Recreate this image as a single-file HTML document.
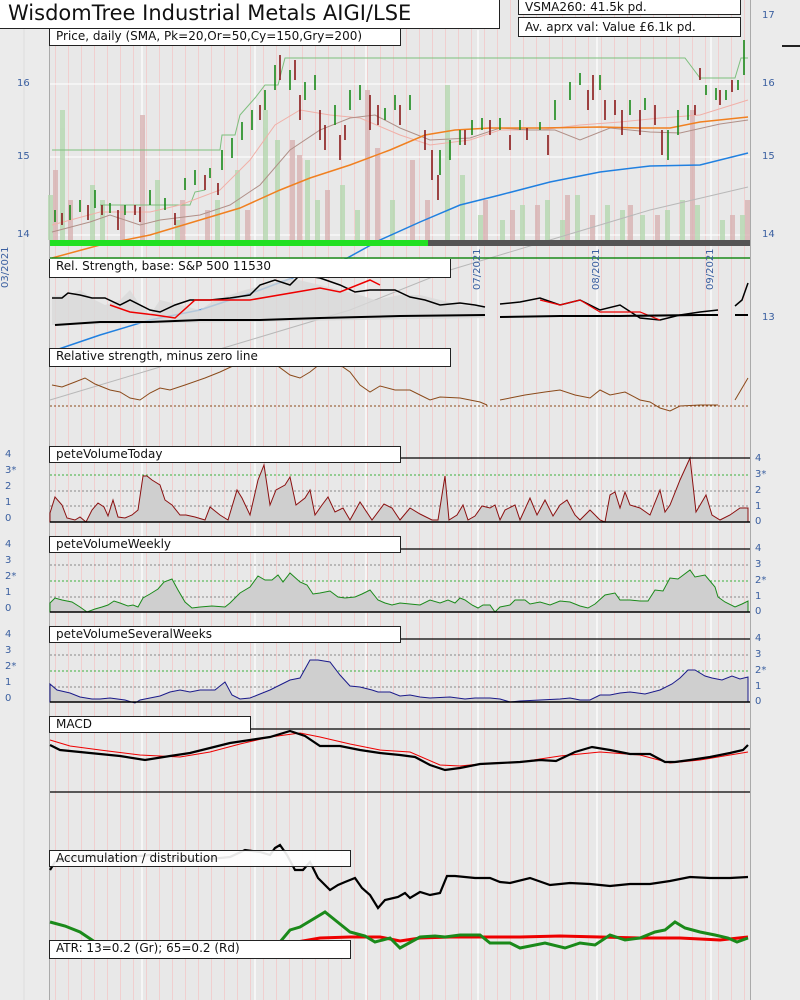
<!DOCTYPE html>
<html><head><meta charset="utf-8"><style>
body{margin:0;width:800px;height:1000px;overflow:hidden;background:#ebebeb;font-family:"DejaVu Sans","Liberation Sans",sans-serif;}
#wrap{position:relative;width:800px;height:1000px;}
.plot{position:absolute;left:49px;top:0;width:701px;height:1000px;background-color:#e8e8e8;
background-image:repeating-linear-gradient(90deg,transparent 0 6px,rgba(255,160,160,.35) 6px 7px,transparent 7px 13px);}
.box{position:absolute;background:#fff;border:1px solid #222;border-top:1px solid #222;font-size:12px;line-height:15px;padding-left:6px;box-sizing:border-box;color:#111;white-space:nowrap;}
.lab{position:absolute;font-size:10px;color:#3a5fa0;}
svg{position:absolute;left:0;top:0;}
</style></head><body><div id="wrap">
<div class="plot"></div>
<svg width="800" height="1000" viewBox="0 0 800 1000">
<!-- borders -->
<line x1="24" y1="0" x2="24" y2="1000" stroke="#dcdcdc"/>
<line x1="49.5" y1="30" x2="49.5" y2="1000" stroke="#aaa"/>
<line x1="750.5" y1="0" x2="750.5" y2="1000" stroke="#aaa"/>
<!-- month white lines -->
<g stroke="#fff" stroke-width="1.2">
<line x1="142" y1="30" x2="142" y2="1000"/><line x1="255" y1="30" x2="255" y2="1000"/><line x1="366" y1="30" x2="366" y2="1000"/><line x1="478" y1="30" x2="478" y2="1000"/><line x1="597" y1="30" x2="597" y2="1000"/><line x1="711" y1="30" x2="711" y2="1000"/>
</g>
<!-- grid -->
<g stroke="#fff" stroke-width="1"><line x1="50" y1="84" x2="750" y2="84"/><line x1="50" y1="157" x2="750" y2="157"/><line x1="50" y1="235" x2="750" y2="235"/></g>
<!-- volume bars -->
<g fill="#b5d8b0" opacity=".8">
<rect x="48" y="195" width="5" height="45"/><rect x="60" y="110" width="5" height="130"/><rect x="90" y="185" width="5" height="55"/><rect x="100" y="200" width="5" height="40"/><rect x="155" y="180" width="5" height="60"/><rect x="175" y="220" width="5" height="20"/><rect x="215" y="200" width="5" height="40"/><rect x="235" y="170" width="5" height="70"/><rect x="263" y="110" width="5" height="130"/><rect x="275" y="140" width="5" height="100"/><rect x="305" y="160" width="5" height="80"/><rect x="315" y="200" width="5" height="40"/><rect x="340" y="185" width="5" height="55"/><rect x="355" y="210" width="5" height="30"/><rect x="390" y="200" width="5" height="40"/><rect x="445" y="85" width="5" height="155"/><rect x="460" y="175" width="5" height="65"/><rect x="478" y="215" width="5" height="25"/><rect x="500" y="220" width="5" height="20"/><rect x="520" y="205" width="5" height="35"/><rect x="545" y="200" width="5" height="40"/><rect x="560" y="220" width="5" height="20"/><rect x="575" y="195" width="5" height="45"/><rect x="605" y="205" width="5" height="35"/><rect x="620" y="210" width="5" height="30"/><rect x="640" y="215" width="5" height="25"/><rect x="665" y="210" width="5" height="30"/><rect x="680" y="200" width="5" height="40"/><rect x="695" y="205" width="5" height="35"/><rect x="720" y="220" width="5" height="20"/><rect x="740" y="215" width="5" height="25"/>
</g>
<g fill="#d8b3b3" opacity=".8">
<rect x="53" y="170" width="5" height="70"/><rect x="68" y="200" width="5" height="40"/><rect x="120" y="205" width="5" height="35"/><rect x="140" y="115" width="5" height="125"/><rect x="180" y="200" width="5" height="40"/><rect x="205" y="210" width="5" height="30"/><rect x="245" y="210" width="5" height="30"/><rect x="290" y="140" width="5" height="100"/><rect x="297" y="155" width="5" height="85"/><rect x="325" y="190" width="5" height="50"/><rect x="365" y="90" width="5" height="150"/><rect x="375" y="148" width="5" height="92"/><rect x="410" y="160" width="5" height="80"/><rect x="425" y="200" width="5" height="40"/><rect x="483" y="200" width="5" height="40"/><rect x="510" y="210" width="5" height="30"/><rect x="535" y="205" width="5" height="35"/><rect x="565" y="195" width="5" height="45"/><rect x="590" y="215" width="5" height="25"/><rect x="628" y="205" width="5" height="35"/><rect x="655" y="215" width="5" height="25"/><rect x="690" y="110" width="5" height="130"/><rect x="730" y="215" width="5" height="25"/><rect x="745" y="200" width="5" height="40"/>
</g>
<!-- peak step line -->
<polyline fill="none" stroke="#7dbf7d" stroke-width="1" points="52,150 220,150 222,135 235,135 240,115 255,98 265,85 278,85 285,58 685,58 700,78 735,78 741,58 748,58"/>
<polyline fill="none" stroke="#7dbf7d" stroke-width="1" points="100,205 190,205 195,192 205,190"/>
<!-- SMAs -->
<polyline fill="none" stroke="#f0b0a8" stroke-width="1" points="52,225 100,212 150,212 180,205 220,190 250,160 275,125 300,110 330,115 360,118 400,135 430,145 470,140 500,130 540,130 580,125 620,122 660,118 700,115 748,100"/>
<polyline fill="none" stroke="#b09088" stroke-width="1" points="52,232 90,222 110,215 140,225 160,220 200,215 230,205 260,185 290,150 320,130 350,118 375,115 400,128 430,140 470,138 500,128 530,130 555,130 580,140 610,128 650,132 680,133 720,124 748,120"/>
<polyline fill="none" stroke="#f08020" stroke-width="1.5" points="52,258 100,245 150,235 200,220 240,208 280,190 310,178 350,165 390,150 425,135 455,130 490,128 540,128 600,127 640,128 670,128 700,122 748,117"/>
<polyline fill="none" stroke="#2080e0" stroke-width="1.5" points="50,352 100,335 150,320 200,310 260,290 300,275 340,262 380,240 420,222 460,205 500,195 550,182 600,172 650,166 700,165 748,153"/>
<polyline fill="none" stroke="#b8b8b8" stroke-width="1" points="50,400 150,370 250,340 350,310 450,270 550,240 650,210 748,187"/>
<!-- candles -->
<g stroke-width="1.6">
<path stroke="#1a8a1a" d="M55 222v-12M70 220v-15M80 212v-12M95 208v-18M110 213v-10M125 215v-10M150 205v-15M165 210v-12M185 190v-12M195 185v-15M210 178v-10M222 170v-20M232 158v-20M242 140v-18M252 130v-20M265 110v-20M275 90v-25M290 90v-20M305 100v-18M315 90v-15M335 125v-20M350 110v-20M360 100v-15M385 120v-12M395 110v-15M410 110v-15M440 175v-25M450 160v-20M460 145v-15M472 135v-15M482 130v-12M500 130v-12M520 130v-10M540 130v-8M555 120v-20M570 100v-18M580 85v-12M600 90v-15M630 115v-15M645 110v-12M668 160v-30M678 135v-25M688 120v-15M706 95v-10M716 100v-12M726 100v-10M738 90v-10M744 75v-35"/>
<path stroke="#8a1a1a" d="M62 225v-12M88 220v-15M102 215v-10M118 230v-20M135 215v-10M140 222v-15M175 225v-12M205 190v-15M218 195v-12M260 120v-15M280 80v-25M295 80v-20M300 120v-25M320 140v-30M325 150v-25M340 160v-25M345 140v-15M370 130v-35M378 125v-20M400 125v-20M425 150v-20M432 180v-30M438 200v-25M465 145v-15M490 135v-15M510 150v-15M527 140v-12M548 155v-20M588 110v-20M593 100v-25M605 120v-20M615 115v-15M622 135v-25M640 135v-25M655 125v-20M662 155v-25M695 115v-10M700 80v-12M720 105v-15M732 92v-12"/>
</g>
<!-- green band -->
<rect x="50" y="240" width="700" height="6" fill="#555"/>
<rect x="50" y="240" width="378" height="6" fill="#22e022"/>
<line x1="50" y1="258" x2="750" y2="258" stroke="#1a8a1a" stroke-width="1.5"/>
<line x1="782" y1="46" x2="800" y2="46" stroke="#222" stroke-width="2"/>
<!-- RS panel -->
<polygon fill="#d8d8d8" opacity=".8" points="52,296 70,295 80,290 95,300 105,305 120,300 130,290 140,305 150,315 160,300 180,305 200,310 215,300 230,295 245,290 265,285 290,278 320,285 340,290 360,295 375,300 400,295 420,295 440,300 460,305 485,307 485,318 52,325"/>
<polyline fill="none" stroke="#000" stroke-width="1.5" points="52,298 62,298 68,293 80,295 92,298 105,298 120,305 130,300 150,310 160,312 175,305 190,300 210,300 230,298 250,295 260,285 275,280 290,285 300,275 320,278 340,285 355,292 370,290 395,290 410,297 425,300 440,305 460,303 475,305 485,307"/>
<polyline fill="none" stroke="#e00" stroke-width="1.5" points="110,305 130,312 155,315 175,318 195,300 215,300 250,300 320,288 340,292 370,280 380,285"/>
<polyline fill="none" stroke="#000" stroke-width="1.5" points="500,304 520,302 540,298 560,305 580,300 600,310 620,305 640,318 660,320 680,315 700,312 718,310"/>
<polyline fill="none" stroke="#e00" stroke-width="1.2" points="540,300 560,305 580,300 600,312 640,312 660,320"/>
<polyline fill="none" stroke="#000" stroke-width="1.5" points="735,306 742,300 748,283"/>
<polyline fill="none" stroke="#000" stroke-width="2" points="55,325 100,322 150,322 200,320 260,320 320,318 400,316 485,315"/>
<polyline fill="none" stroke="#000" stroke-width="2" points="500,317 560,316 620,316 700,315 718,315"/>
<line x1="735" y1="315" x2="748" y2="315" stroke="#000" stroke-width="2"/>
<!-- RS minus zero -->
<polyline fill="none" stroke="#8a4a1a" stroke-width="1" points="52,385 62,387 75,382 85,378 95,384 110,390 120,392 130,398 140,400 150,393 160,388 170,390 185,385 205,378 220,372 235,365 250,360 260,358 275,364 290,375 300,378 310,372 325,360 340,365 350,372 360,385 370,392 380,386 395,390 410,390 420,395 430,400 440,397 460,398 480,402 487,405"/>
<polyline fill="none" stroke="#8a4a1a" stroke-width="1" points="500,400 510,398 525,395 545,392 560,390 575,395 590,398 600,390 610,395 625,392 640,400 650,402 660,408 670,411 680,406 700,405 718,405"/>
<polyline fill="none" stroke="#8a4a1a" stroke-width="1" points="735,400 748,378"/>
<line x1="50" y1="406" x2="750" y2="406" stroke="#8a4a1a" stroke-dasharray="2,2"/>
<!-- volume panels -->
<g stroke-dasharray="2,2" stroke-width="1">
<line x1="50" y1="475" x2="750" y2="475" stroke="#3bb03b"/><line x1="50" y1="491" x2="750" y2="491" stroke="#888"/><line x1="50" y1="506" x2="750" y2="506" stroke="#888"/>
<line x1="50" y1="565" x2="750" y2="565" stroke="#888"/><line x1="50" y1="581" x2="750" y2="581" stroke="#3bb03b"/><line x1="50" y1="597" x2="750" y2="597" stroke="#888"/>
<line x1="50" y1="655" x2="750" y2="655" stroke="#888"/><line x1="50" y1="671" x2="750" y2="671" stroke="#3bb03b"/><line x1="50" y1="687" x2="750" y2="687" stroke="#888"/>
</g>
<polygon fill="#cfcfcf" stroke="#8b1010" stroke-width="1" points="50,522 50,513 55,497 62,505 67,518 75,520 80,517 86,522 92,510 98,503 104,507 108,516 113,500 118,517 125,518 132,515 138,510 143,476 147,476 152,480 160,485 165,500 172,505 180,515 186,515 195,517 205,520 210,507 220,515 228,520 237,490 242,498 250,515 258,480 264,465 270,505 276,490 285,485 290,477 296,505 305,498 310,490 315,515 322,505 328,497 335,512 343,508 350,520 360,502 372,520 384,504 392,508 400,520 410,508 420,514 432,520 438,520 445,476 449,520 457,515 463,505 468,520 475,516 482,506 490,508 495,505 500,520 505,510 515,505 520,520 530,498 537,515 545,500 553,516 560,505 567,500 575,515 580,520 590,510 600,520 605,522 610,495 615,492 620,508 625,492 630,505 640,508 650,515 660,490 665,512 670,505 680,480 690,458 696,512 706,495 712,515 720,520 730,515 740,508 748,508 748,522"/>
<line x1="50" y1="522" x2="750" y2="522" stroke="#000" stroke-width="1.5"/>
<polygon fill="#cfcfcf" stroke="#1a8a1a" stroke-width="1" points="50,612 50,603 55,598 62,600 72,602 80,607 87,612 95,609 102,607 108,605 114,601 120,603 128,606 133,605 138,607 143,598 150,594 158,589 164,582 172,579 178,590 185,602 192,608 200,607 212,606 225,607 230,603 240,593 250,587 258,576 265,580 272,580 278,575 283,582 290,573 300,582 307,585 313,594 320,593 330,591 338,597 345,598 355,597 362,594 370,590 378,600 385,603 392,605 400,603 410,604 420,605 430,600 440,603 448,600 455,603 460,598 465,600 472,605 478,608 483,605 490,605 495,612 500,607 510,605 515,600 525,600 530,604 540,602 550,605 560,601 570,602 580,606 588,608 595,604 605,595 615,593 620,600 630,600 640,601 648,601 655,590 663,591 670,578 678,579 690,570 695,577 705,575 715,587 718,597 725,602 735,607 742,604 748,601 748,612"/>
<line x1="50" y1="612" x2="750" y2="612" stroke="#000" stroke-width="1.5"/>
<polygon fill="#cfcfcf" stroke="#1a1a8a" stroke-width="1" points="50,702 50,684 57,690 70,693 80,697 92,699 100,699 110,698 125,700 135,703 140,700 150,698 160,696 170,692 180,690 190,692 200,690 215,690 225,682 232,695 240,699 250,698 260,694 270,690 280,685 290,680 300,678 310,660 318,660 330,662 340,675 350,686 360,687 372,690 378,692 390,692 400,696 410,695 420,697 430,698 450,697 465,699 475,698 490,698 500,699 510,702 520,701 540,700 560,699 570,698 580,700 590,700 600,695 610,695 620,693 630,692 645,694 660,690 672,684 680,678 688,670 695,670 705,676 712,678 722,680 732,676 740,679 748,677 748,702"/>
<line x1="50" y1="702" x2="750" y2="702" stroke="#000" stroke-width="1.5"/>
<!-- panel header lines -->
<g stroke="#000" stroke-width="1.3">
<line x1="400" y1="458" x2="750" y2="458"/><line x1="400" y1="549" x2="750" y2="549"/><line x1="400" y1="639" x2="750" y2="639"/><line x1="250" y1="729" x2="750" y2="729"/><line x1="50" y1="792" x2="750" y2="792"/>
</g>
<!-- MACD -->
<polyline fill="none" stroke="#e00" stroke-width="1" points="50,740 70,746 100,750 140,755 180,757 210,752 240,744 270,737 300,733 320,737 350,744 380,750 410,752 440,765 460,766 490,763 520,762 560,756 600,752 640,755 670,763 700,760 748,752"/>
<polyline fill="none" stroke="#000" stroke-width="2.2" points="50,745 60,750 80,752 100,754 120,756 145,760 170,756 190,753 210,748 230,743 250,740 270,737 290,731 305,736 320,746 340,746 360,750 380,753 400,755 415,757 430,765 445,770 460,768 480,764 500,763 520,762 540,760 556,761 575,752 592,747 610,750 630,754 650,754 665,762 675,762 690,760 710,757 730,753 743,750 748,745"/>
<!-- acc/dist -->
<polyline fill="none" stroke="#000" stroke-width="2.2" points="50,870 55,862 70,858 90,855 110,858 130,857 150,855 170,858 200,860 230,857 245,850 260,852 270,855 275,848 280,845 287,855 295,870 303,870 310,862 318,878 330,890 338,885 345,882 355,878 362,888 370,895 378,908 385,900 398,897 405,893 410,898 420,892 430,895 440,893 447,876 455,876 475,878 490,878 500,882 510,883 530,878 550,885 570,883 590,884 610,886 630,884 650,884 670,881 690,877 710,878 730,878 748,877"/>
<polyline fill="none" stroke="#e00" stroke-width="3" points="280,945 320,938 350,937 380,937 400,941 420,938 450,937 520,937 560,936 600,937 640,938 680,938 720,940 748,937"/>
<polyline fill="none" stroke="#1a8a1a" stroke-width="3" points="50,922 65,926 80,932 95,942 110,948 275,948 290,930 300,927 315,918 325,912 335,920 350,932 365,936 375,942 390,938 400,948 420,937 435,936 445,937 460,935 480,935 490,943 510,943 520,948 545,943 565,948 580,943 595,945 610,935 625,940 640,938 655,932 665,930 675,922 685,928 700,932 715,935 728,938 737,942 748,938"/>
</svg>
<!-- labels / boxes -->
<div class="box" style="left:0;top:0;width:500px;height:29px;font-size:21px;line-height:26px;padding-left:8px;border-top:none;border-left:none;">WisdomTree Industrial Metals AIGI/LSE</div>
<div class="box" style="left:518px;top:-2px;width:223px;height:17px;font-size:12px;line-height:17px;">VSMA260: 41.5k pd.</div>
<div class="box" style="left:518px;top:17px;width:223px;height:20px;font-size:12px;line-height:18px;">Av. aprx val: Value £6.1k pd.</div>
<div class="box" style="left:49px;top:28px;width:352px;height:18px;">Price, daily (SMA, Pk=20,Or=50,Cy=150,Gry=200)</div>
<div class="box" style="left:49px;top:259px;width:402px;height:19px;border-top:none;">Rel. Strength, base: S&amp;P 500 11530</div>
<div class="box" style="left:49px;top:348px;width:402px;height:19px;">Relative strength, minus zero line</div>
<div class="box" style="left:49px;top:446px;width:352px;height:17px;border-right:1px solid #222;">peteVolumeToday</div>
<div class="box" style="left:49px;top:536px;width:352px;height:17px;">peteVolumeWeekly</div>
<div class="box" style="left:49px;top:626px;width:352px;height:17px;">peteVolumeSeveralWeeks</div>
<div class="box" style="left:49px;top:716px;width:202px;height:17px;">MACD</div>
<div class="box" style="left:49px;top:850px;width:302px;height:17px;background:rgba(255,255,255,.9);">Accumulation / distribution</div>
<div class="box" style="left:49px;top:940px;width:302px;height:19px;">ATR: 13=0.2 (Gr); 65=0.2 (Rd)</div>
<!-- axis labels -->
<div class="lab" style="left:762px;top:10px;">17</div>
<div class="lab" style="left:762px;top:78px;">16</div><div class="lab" style="left:17px;top:78px;">16</div>
<div class="lab" style="left:762px;top:151px;">15</div><div class="lab" style="left:17px;top:151px;">15</div>
<div class="lab" style="left:762px;top:229px;">14</div><div class="lab" style="left:17px;top:229px;">14</div>
<div class="lab" style="left:762px;top:312px;">13</div>
<div class="lab" style="left:5px;top:449px;">4</div><div class="lab" style="left:5px;top:465px;">3*</div><div class="lab" style="left:5px;top:481px;">2</div><div class="lab" style="left:5px;top:497px;">1</div><div class="lab" style="left:5px;top:513px;">0</div>
<div class="lab" style="left:755px;top:453px;">4</div><div class="lab" style="left:755px;top:469px;">3*</div><div class="lab" style="left:755px;top:485px;">2</div><div class="lab" style="left:755px;top:501px;">1</div><div class="lab" style="left:755px;top:516px;">0</div>
<div class="lab" style="left:5px;top:539px;">4</div><div class="lab" style="left:5px;top:555px;">3</div><div class="lab" style="left:5px;top:571px;">2*</div><div class="lab" style="left:5px;top:587px;">1</div><div class="lab" style="left:5px;top:603px;">0</div>
<div class="lab" style="left:755px;top:543px;">4</div><div class="lab" style="left:755px;top:559px;">3</div><div class="lab" style="left:755px;top:575px;">2*</div><div class="lab" style="left:755px;top:591px;">1</div><div class="lab" style="left:755px;top:606px;">0</div>
<div class="lab" style="left:5px;top:629px;">4</div><div class="lab" style="left:5px;top:645px;">3</div><div class="lab" style="left:5px;top:661px;">2*</div><div class="lab" style="left:5px;top:677px;">1</div><div class="lab" style="left:5px;top:693px;">0</div>
<div class="lab" style="left:755px;top:633px;">4</div><div class="lab" style="left:755px;top:649px;">3</div><div class="lab" style="left:755px;top:665px;">2*</div><div class="lab" style="left:755px;top:681px;">1</div><div class="lab" style="left:755px;top:696px;">0</div>
<div class="lab" style="left:0;top:288px;transform:rotate(-90deg);transform-origin:0 0;">03/2021</div>
<div class="lab" style="left:472px;top:290px;transform:rotate(-90deg);transform-origin:0 0;">07/2021</div>
<div class="lab" style="left:591px;top:290px;transform:rotate(-90deg);transform-origin:0 0;">08/2021</div>
<div class="lab" style="left:705px;top:290px;transform:rotate(-90deg);transform-origin:0 0;">09/2021</div>
</div></body></html>
